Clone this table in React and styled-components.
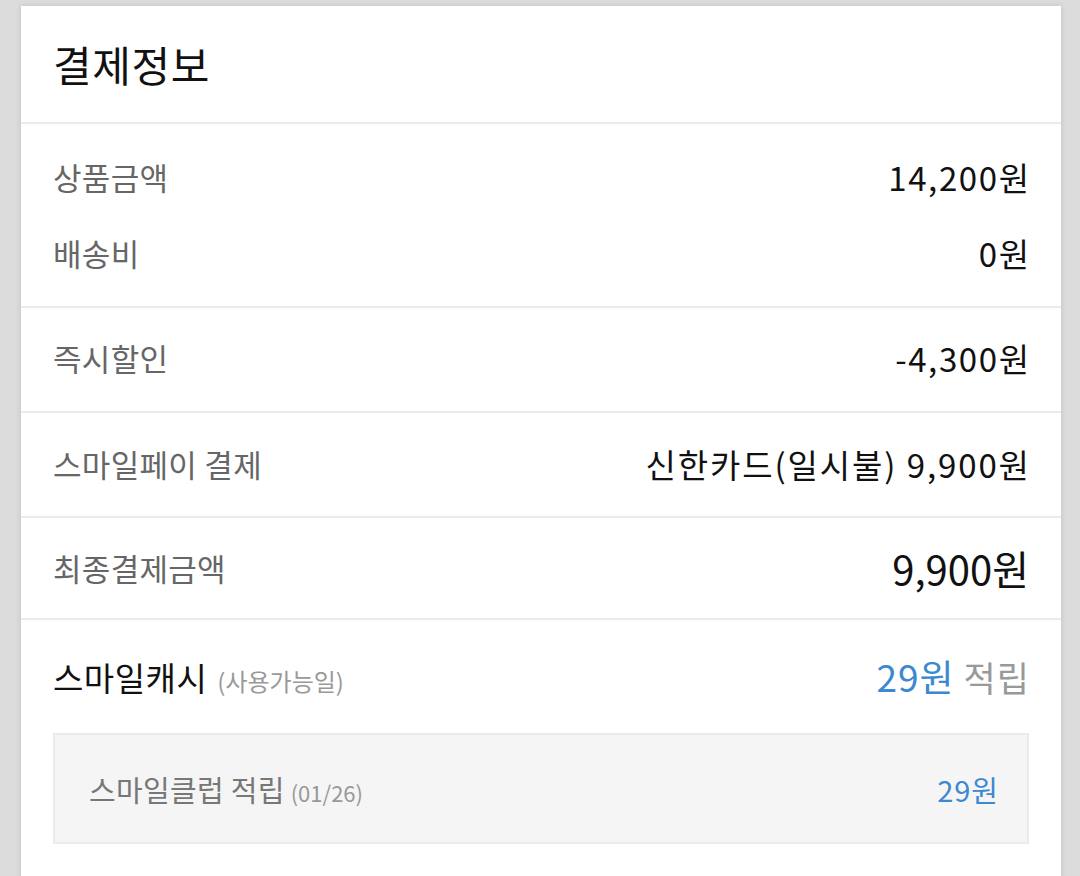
import React from "react";
import styled, { createGlobalStyle } from "styled-components";

const GlobalStyle = createGlobalStyle`
  html, body {
    margin: 0;
    padding: 0;
    background: #dcdcdc;
    font-family: "Noto Sans CJK KR", "Noto Sans", sans-serif;
  }
  * { box-sizing: border-box; }
`;

const Card = styled.div`
  margin: 6px 19px 0 21px;
  background: #ffffff;
  box-shadow: 0 0 6px rgba(0, 0, 0, 0.12);
  min-height: 870px;
`;

const Header = styled.div`
  height: 116px;
  padding: 0 32px;
  display: flex;
  align-items: center;
`;

const Title = styled.h1`
  margin: 0;
  font-size: 42px;
  font-weight: 400;
  color: #111;
  line-height: 48px;
  letter-spacing: 0.6px;
`;

const Section = styled.section`
  border-top: 2px solid #ebebeb;
  padding: ${(p) => p.$pad || "29px 32px 30px"};
  display: flex;
  flex-direction: column;
  gap: ${(p) => p.$gap || "0px"};
`;

const Row = styled.div`
  display: flex;
  justify-content: space-between;
  align-items: center;
  line-height: ${(p) => p.$lh || "44px"};
  white-space: nowrap;
`;

const Group = styled.span`
  flex-shrink: 0;
  white-space: nowrap;
`;

const Label = styled.span`
  font-size: 31px;
  color: #666;
  letter-spacing: 0.3px;
`;

const Value = styled.span`
  font-size: ${(p) => p.$size || "33px"};
  letter-spacing: ${(p) => p.$ls || "1.6px"};
  margin-right: -${(p) => p.$ls || "1.6px"};
  color: #111;
`;

const CashLabel = styled.span`
  font-size: 33px;
  color: #111;
  letter-spacing: 0.5px;
`;

const Sub = styled.span`
  font-size: ${(p) => p.$size || "24px"};
  color: #999;
  margin-left: ${(p) => p.$ml || "10px"};
`;

const Blue = styled.span`
  font-size: ${(p) => p.$size || "37px"};
  letter-spacing: 1px;
  color: #3c89cf;
`;

const Earn = styled.span`
  font-size: 35px;
  color: #999;
  margin-left: 9px;
  letter-spacing: 1px;
  margin-right: -1px;
`;

const Box = styled.div`
  margin-top: 24px;
  height: 111px;
  border: 2px solid #ebebeb;
  background: #f5f5f5;
  padding: 0 28px 0 34px;
  display: flex;
  justify-content: space-between;
  align-items: center;
  white-space: nowrap;
`;

const BoxLabel = styled.span`
  font-size: 29px;
  color: #777;
  letter-spacing: 0.3px;
`;

export default function App() {
  return (
    <>
      <GlobalStyle />
      <Card>
        <Header>
          <Title>결제정보</Title>
        </Header>
        <Section $pad="31px 32px 31px" $gap="32px">
          <Row>
            <Label>상품금액</Label>
            <Value>14,200원</Value>
          </Row>
          <Row>
            <Label>배송비</Label>
            <Value>0원</Value>
          </Row>
        </Section>
        <Section $pad="28px 32px 31px">
          <Row>
            <Label>즉시할인</Label>
            <Value>-4,300원</Value>
          </Row>
        </Section>
        <Section>
          <Row>
            <Label>스마일페이 결제</Label>
            <Value $ls="1.9px">신한카드(일시불) 9,900원</Value>
          </Row>
        </Section>
        <Section $pad="28px 32px 28px">
          <Row>
            <Label>최종결제금액</Label>
            <Value $size="40px" $ls="0px">9,900원</Value>
          </Row>
        </Section>
        <Section $pad="32px 32px 40px">
          <Row $lh="48px">
            <Group>
              <CashLabel>스마일캐시</CashLabel>
              <Sub>(사용가능일)</Sub>
            </Group>
            <Group>
              <Blue>29원</Blue>
              <Earn>적립</Earn>
            </Group>
          </Row>
          <Box>
            <Group>
              <BoxLabel>스마일클럽 적립</BoxLabel>
              <Sub $size="22px" $ml="6px">(01/26)</Sub>
            </Group>
            <Blue $size="29px">29원</Blue>
          </Box>
        </Section>
      </Card>
    </>
  );
}
